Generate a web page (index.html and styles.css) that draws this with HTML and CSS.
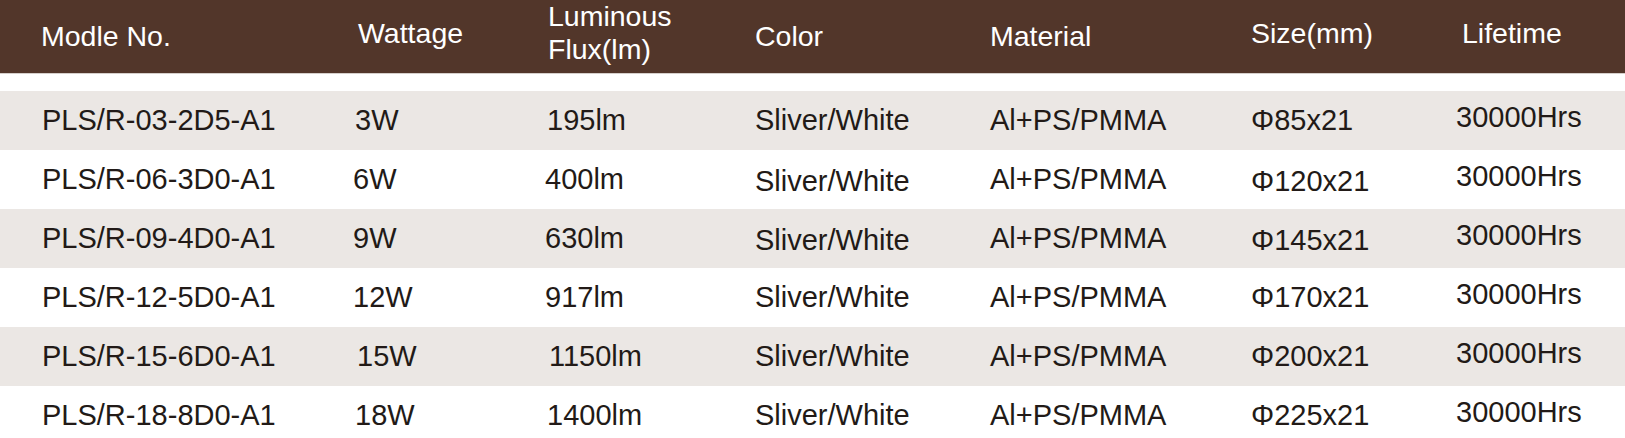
FILE: index.html
```html
<!DOCTYPE html>
<html lang="en">
<head>
<meta charset="utf-8">
<title>Specification table</title>
<link rel="stylesheet" href="styles.css">
</head>
<body>
<div class="spec">
  <div class="head">
    <div class="hc">Modle No.</div>
    <div class="hc up p5">Wattage</div>
    <div class="hc up two p3">Luminous<br>Flux(lm)</div>
    <div class="hc">Color</div>
    <div class="hc">Material</div>
    <div class="hc up">Size(mm)</div>
    <div class="hc up p6">Lifetime</div>
  </div>
  <div class="gap"></div>
  <div class="row alt">
    <div class="c p1">PLS/R-03-2D5-A1</div><div class="c p2">3W</div><div class="c p2">195lm</div><div class="c">Sliver/White</div><div class="c">Al+PS/PMMA</div><div class="c">Φ85x21</div><div class="c up">30000Hrs</div>
  </div>
  <div class="row">
    <div class="c p1">PLS/R-06-3D0-A1</div><div class="c">6W</div><div class="c">400lm</div><div class="c dn">Sliver/White</div><div class="c">Al+PS/PMMA</div><div class="c dn">Φ120x21</div><div class="c up">30000Hrs</div>
  </div>
  <div class="row alt">
    <div class="c p1">PLS/R-09-4D0-A1</div><div class="c">9W</div><div class="c">630lm</div><div class="c dn">Sliver/White</div><div class="c">Al+PS/PMMA</div><div class="c dn">Φ145x21</div><div class="c up">30000Hrs</div>
  </div>
  <div class="row">
    <div class="c p1">PLS/R-12-5D0-A1</div><div class="c">12W</div><div class="c">917lm</div><div class="c">Sliver/White</div><div class="c">Al+PS/PMMA</div><div class="c">Φ170x21</div><div class="c up">30000Hrs</div>
  </div>
  <div class="row alt">
    <div class="c p1">PLS/R-15-6D0-A1</div><div class="c p4">15W</div><div class="c p4">1150lm</div><div class="c">Sliver/White</div><div class="c">Al+PS/PMMA</div><div class="c">Φ200x21</div><div class="c up">30000Hrs</div>
  </div>
  <div class="row">
    <div class="c p1">PLS/R-18-8D0-A1</div><div class="c p2">18W</div><div class="c p2">1400lm</div><div class="c">Sliver/White</div><div class="c">Al+PS/PMMA</div><div class="c">Φ225x21</div><div class="c up">30000Hrs</div>
  </div>
</div>
</body>
</html>
```

FILE: styles.css
```css
html, body {
  margin: 0;
  padding: 0;
  background: #ffffff;
}

body {
  width: 1625px;
  height: 438px;
  overflow: hidden;
  font-family: "Liberation Sans", Arial, sans-serif;
}

.spec {
  display: flex;
  flex-direction: column;
}

.head,
.row {
  display: grid;
  grid-template-columns: 312px 192px 210px 235px 261px 205px 1fr;
  padding-left: 41px;
  align-items: center;
}

.head {
  height: 73px;
  background: #52362a;
  border-bottom: 1px solid #d5cfcb;
  color: #ffffff;
  font-size: 28.5px;
  line-height: 33px;
}

.gap {
  height: 17px;
}

.row {
  height: 59px;
  color: #221a17;
  font-size: 29px;
  line-height: 33px;
  flex: none;
}

.row.alt {
  background: #ebe7e4;
}

.hc,
.c {
  white-space: nowrap;
}

.hc.up {
  padding-bottom: 7px;
}

.c.up {
  padding-bottom: 6px;
}

.c.dn {
  padding-top: 4px;
}

.p1 { padding-left: 1px; }
.p2 { padding-left: 2px; }
.p3 { padding-left: 3px; }
.p4 { padding-left: 4px; }
.p5 { padding-left: 5px; }
.p6 { padding-left: 6px; }
```
